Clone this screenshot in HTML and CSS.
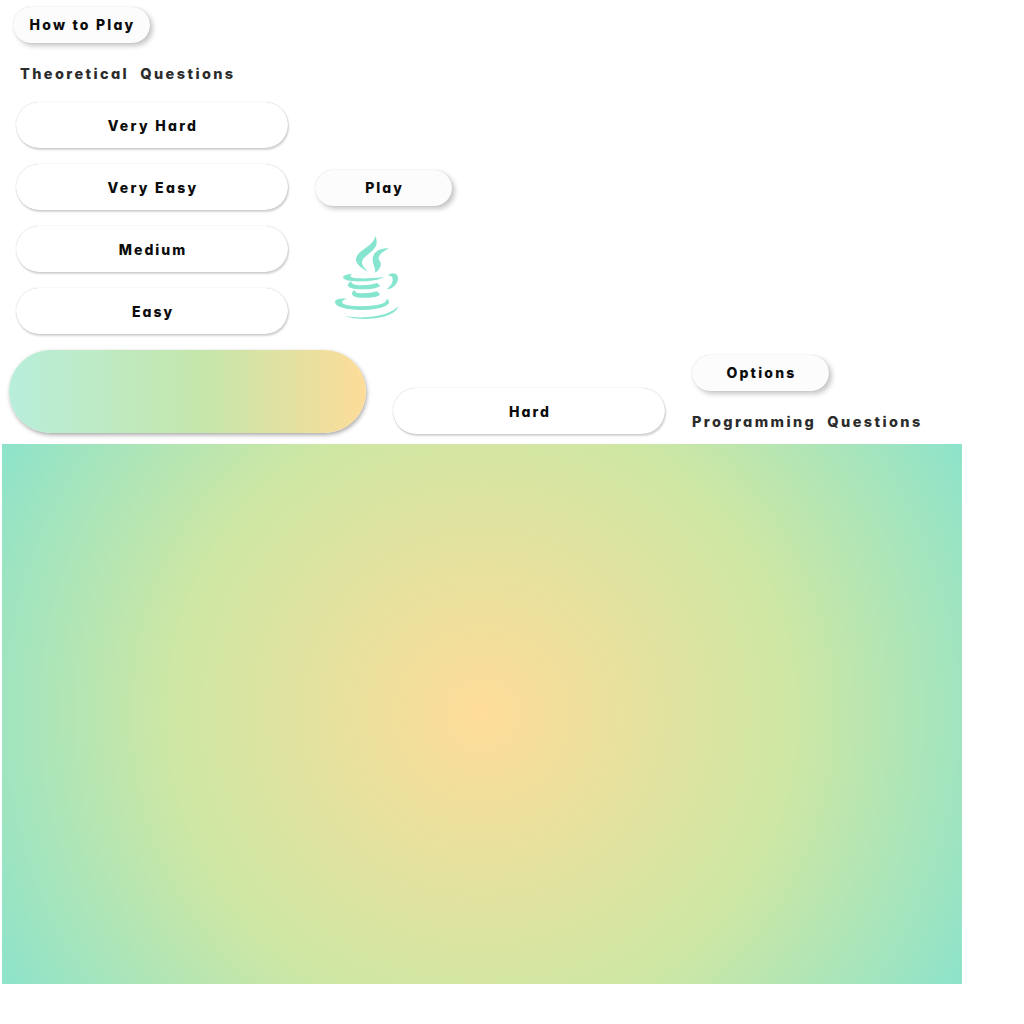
FILE: index.html
```html
<!DOCTYPE html>
<html lang="en">
<head>
<meta charset="utf-8">
<title>Java Quiz</title>
<link rel="stylesheet" href="styles.css">
</head>
<body>
<main class="board">
  <section class="upper">
    <div class="menu">
      <button class="pill small howto">How to Play</button>
      <h2 class="heading theory">Theoretical&nbsp; Questions</h2>
      <div class="levels">
        <button class="pill wide very">Very Hard</button>
        <button class="pill wide very">Very Easy</button>
        <button class="pill wide">Medium</button>
        <button class="pill wide">Easy</button>
      </div>
    </div>
    <div class="start">
      <button class="pill small">Play</button>
      <svg class="java" viewBox="0 0 255 285" aria-label="Java">
        <path d="M150 17C157 30 158 45 146 58C132 74 112 82 111 97C111 108 119 116 131 126C112 116 92 102 93 88C94 60 150 48 150 17Z"/>
        <path d="M192 55C176 64 162 72 161 84C161 93 170 95 167 107C164 117 158 124 150 128C153 115 143 106 143 88C143 64 168 54 192 55Z"/>
        <path d="M82 131C66 132 55 136 54 142C55 152 80 155 112 154C140 153 168 149 176 141C150 145 120 146 100 145C84 144 76 141 76 138C76 134 80 133 82 131Z"/>
        <path d="M80 154C70 158 67 163 69 168C74 176 95 178 118 178C140 178 158 174 166 168L156 159C140 165 112 167 95 165C84 163 78 160 80 154Z"/>
        <path d="M92 179C80 184 79 191 84 197C92 203 110 204 124 203C145 203 158 199 166 194L156 184C142 189 115 191 100 189C90 187 88 183 92 179Z"/>
        <path d="M65 206C45 203 29 208 30 217C31 232 65 239 107 240C150 240 190 232 192 217C192 212 190 208 184 206C188 215 174 222 150 226C110 231 62 229 53 220C49 214 55 209 65 206Z"/>
        <path d="M59 258C90 264 125 263 155 258C185 253 205 244 219 229C217 245 195 256 168 262C130 270 85 268 59 258Z"/>
        <path d="M188 137C196 129 208 128 214 133C222 141 220 155 211 165C204 173 194 178 184 178C195 170 203 160 203 149C203 139 197 136 188 137Z"/>
      </svg>
    </div>
  </section>
  <section class="lower">
    <div class="banner"></div>
    <button class="pill wide hard">Hard</button>
    <div class="side">
      <button class="pill small options">Options</button>
      <h2 class="heading programming">Programming&nbsp; Questions</h2>
    </div>
  </section>
  <div class="backdrop"></div>
</main>
</body>
</html>
```
FILE: styles.css
```css
* { box-sizing: border-box; }
body { margin: 0; background: #fff; font-family: Inter, "Liberation Sans", sans-serif; font-feature-settings: "cv11"; }
.board { width: 1024px; height: 1024px; overflow: hidden; }
.upper { display: flex; height: 350px; }
.menu { width: 315px; padding: 7px 0 0 13px; }
.pill {
  display: flex; align-items: center; justify-content: center;
  padding: 0 0 0 2px; border: 0; font: 800 14px/18px Inter, "Liberation Sans", sans-serif;
  font-feature-settings: "cv11";
  letter-spacing: 2px; color: #0c0c0c; white-space: nowrap;
}
.small {
  width: 137px; height: 36px; border-radius: 18px; background: #fcfcfc;
  box-shadow: 3px 3px 5px rgba(0,0,0,.22), 0 0 1px rgba(0,0,0,.2);
}
.wide {
  width: 272px; height: 46px; padding-top: 1px; border-radius: 23px; background: #fff;
  box-shadow: 1px 2px 2px rgba(0,0,0,.17), 0 0 1px rgba(0,0,0,.3);
}
.howto, .options { letter-spacing: 2.2px; }
.very { letter-spacing: 2.3px; }
.heading { margin: 0; font-size: 14.5px; line-height: 20px; font-weight: 800; letter-spacing: 2.4px; color: #2c2c2c; white-space: nowrap; }
.theory { margin: 21px 0 0 7px; }
.levels { display: flex; flex-direction: column; gap: 16px; margin: 18px 0 0 3px; }
.start { padding-top: 170px; }
.java { display: block; width: 85px; height: 95px; margin: 24px 0 0 10px; fill: #86e5cf; }
.lower { display: flex; height: 94px; padding-left: 9px; }
.banner {
  width: 357px; height: 83px; border-radius: 42px;
  background: linear-gradient(90deg, #b8eedb, #c4e6aa 54%, #fedc99);
  box-shadow: 1px 2px 4px rgba(0,0,0,.35);
}
.hard { margin: 38px 0 0 27px; }
.side { margin: 5px 0 0 27px; }
.programming { margin-top: 21px; }
.backdrop {
  width: 960px; height: 540px; margin-left: 2px;
  background: radial-gradient(circle farthest-corner, #ffdc99, #cde7a4 57%, #8de3cb);
}
```
